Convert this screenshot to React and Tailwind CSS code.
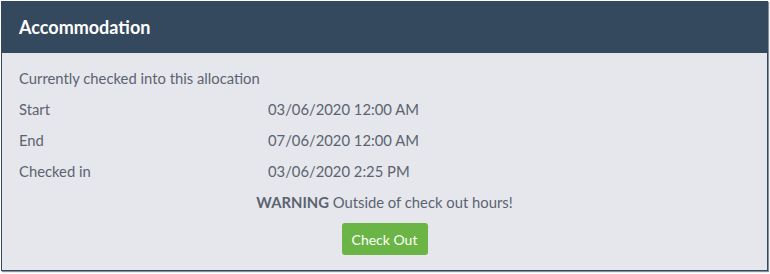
import React from "react";

const rows = [
  { label: "Start", value: "03/06/2020 12:00 AM" },
  { label: "End", value: "07/06/2020 12:00 AM" },
  { label: "Checked in", value: "03/06/2020 2:25 PM" },
];

export default function App() {
  return (
    <div className="w-[770px] h-[274px] bg-white p-px font-['Lato','Noto_Sans',sans-serif]">
      <div className="w-[767px] h-[270px] border border-[#34495e] bg-[#e6e7ec] shadow-[1px_1px_1px_rgba(52,73,94,0.6)] flex flex-col">
        <div className="h-[51px] bg-[#34495e] flex items-center px-[17px]">
          <h2 className="text-white font-bold text-[18px]">Accommodation</h2>
        </div>
        <div className="px-[17px] pt-[10px] text-[14.8px] text-[#5b6370] flex flex-col">
          <div className="h-[31px] flex items-center">Currently checked into this allocation</div>
          {rows.map((r) => (
            <div key={r.label} className="h-[31px] flex items-center">
              <span className="w-[249px]">{r.label}</span>
              <span>{r.value}</span>
            </div>
          ))}
          <div className="h-[31px] flex items-center justify-center">
            <span>
              <b className="font-bold">WARNING</b> Outside of check out hours!
            </span>
          </div>
          <div className="flex justify-center mt-[5px]">
            <button className="w-[86px] h-[32px] rounded-[3px] bg-[#6ab546] text-white text-[14px]">
              Check Out
            </button>
          </div>
        </div>
      </div>
    </div>
  );
}
